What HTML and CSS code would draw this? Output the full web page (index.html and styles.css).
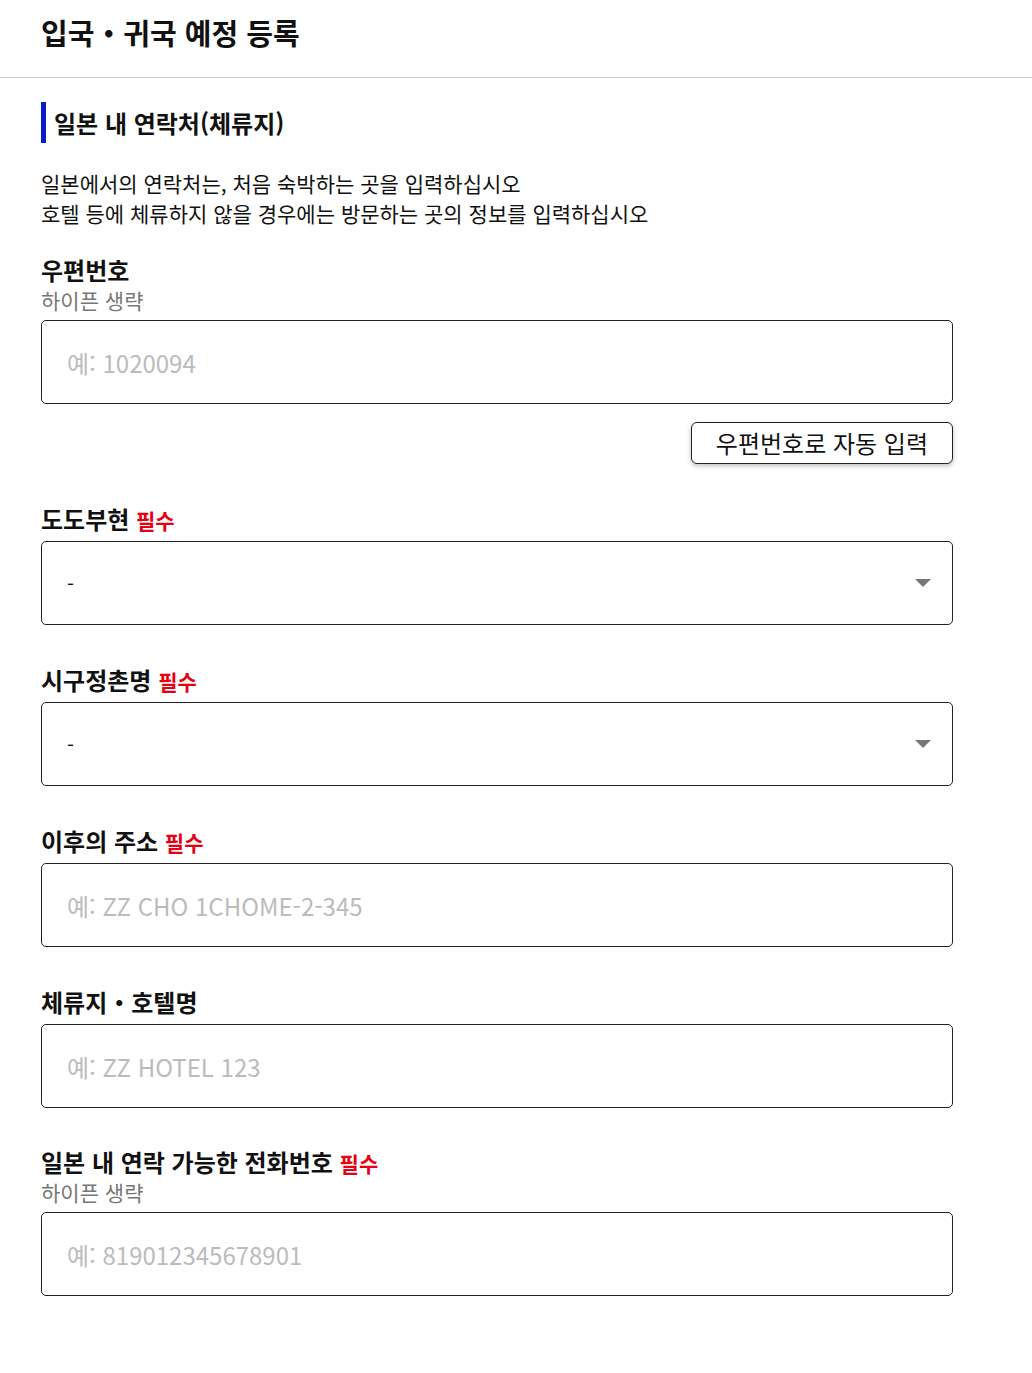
FILE: index.html
```html
<!DOCTYPE html>
<html lang="ko">

<head>
    <meta charset="UTF-8" />
    <title>입국・귀국 예정 등록</title>
    <link rel="stylesheet" href="styles.css">
</head>

<body>
    <!-- 헤더 -->
    <header class="page-header">
        <h1 class="page-title">입국・귀국 예정 등록</h1>
    </header>

    <main class="content">
        <h2 class="section-title">일본 내 연락처(체류지)</h2>

        <p class="lead">
            일본에서의 연락처는, 처음 숙박하는 곳을 입력하십시오<br>
            호텔 등에 체류하지 않을 경우에는 방문하는 곳의 정보를 입력하십시오
        </p>

        <!-- 우편번호 -->
        <div class="field field-first">
            <div class="field-head">
                <label class="label" for="zip">우편번호</label>
                <div class="hint">하이픈 생략</div>
            </div>
            <input class="input" id="zip" type="text" placeholder="예: 1020094">
            <div class="btn-row">
                <button class="btn" type="button">우편번호로 자동 입력</button>
            </div>
        </div>

        <!-- 도도부현 -->
        <div class="field">
            <div class="field-head">
                <label class="label" for="pref">도도부현 <span class="req">필수</span></label>
            </div>
            <div class="select-wrap">
                <select class="select" id="pref">
                    <option>-</option>
                </select>
            </div>
        </div>

        <!-- 시구정촌명 -->
        <div class="field">
            <div class="field-head">
                <label class="label" for="city">시구정촌명 <span class="req">필수</span></label>
            </div>
            <div class="select-wrap">
                <select class="select" id="city">
                    <option>-</option>
                </select>
            </div>
        </div>

        <!-- 이후의 주소 -->
        <div class="field">
            <div class="field-head">
                <label class="label" for="addr">이후의 주소 <span class="req">필수</span></label>
            </div>
            <input class="input" id="addr" type="text" placeholder="예: ZZ CHO 1CHOME-2-345">
        </div>

        <!-- 체류지・호텔명 -->
        <div class="field">
            <div class="field-head">
                <label class="label" for="hotel">체류지・호텔명</label>
            </div>
            <input class="input" id="hotel" type="text" placeholder="예: ZZ HOTEL 123">
        </div>

        <!-- 전화번호 -->
        <div class="field field-last">
            <div class="field-head">
                <label class="label" for="tel">일본 내 연락 가능한 전화번호 <span class="req">필수</span></label>
                <div class="hint">하이픈 생략</div>
            </div>
            <input class="input" id="tel" type="text" placeholder="예: 819012345678901">
        </div>
    </main>
</body>

</html>
```

FILE: styles.css
```css
* {
    box-sizing: border-box;
}

body {
    margin: 0;
    padding: 0;
    background: #fff;
    color: #111;
    font-family: "Noto Sans CJK KR", "Noto Sans", sans-serif;
}

.page-header {
    padding: 11px 41px 24px;
    border-bottom: 1px solid #ccc;
}

.page-title {
    margin: 0;
    font-size: 29px;
    line-height: 42px;
    font-weight: bold;
}

.content {
    width: 953px;
    padding: 24px 0 60px 41px;
}

.section-title {
    margin: 0;
    padding-left: 8px;
    border-left: 5px solid #0a1ec8;
    font-size: 24px;
    line-height: 41px;
    font-weight: bold;
}

.lead {
    margin: 25px 0 0;
    font-size: 21px;
    line-height: 30px;
}

.field {
    margin-top: 39px;
}

.field-first {
    margin-top: 26px;
}

.field-last {
    margin-top: 38px;
}

.field-head {
    margin-bottom: 6px;
}

.label {
    display: block;
    font-size: 24px;
    line-height: 32px;
    font-weight: bold;
}

.req {
    color: #e60012;
    font-size: 21px;
    line-height: 1;
}

.hint {
    color: #777;
    font-size: 21px;
    line-height: 28px;
}

.input,
.select {
    display: block;
    width: 100%;
    height: 84px;
    margin: 0;
    padding: 0 25px;
    border: 1px solid #222;
    border-radius: 5px;
    background: #fff;
    color: #111;
    font-family: inherit;
    font-size: 24px;
    outline: none;
}

.input::placeholder {
    color: #bbb;
}

.select {
    appearance: none;
    -webkit-appearance: none;
    font-size: 20px;
}

.select-wrap {
    position: relative;

    &::after {
        content: "";
        position: absolute;
        right: 22px;
        top: 38px;
        border-left: 8px solid transparent;
        border-right: 8px solid transparent;
        border-top: 8px solid #777;
        pointer-events: none;
    }
}

.btn-row {
    display: flex;
    justify-content: flex-end;
    margin-top: 18px;
}

.btn {
    height: 42px;
    padding: 0 24px;
    border: 1px solid #222;
    border-radius: 6px;
    background: #fff;
    color: #111;
    font-family: inherit;
    font-size: 24px;
    line-height: 1;
    box-shadow: 0 2px 5px rgba(0, 0, 0, 0.25);
    cursor: pointer;
}
```
